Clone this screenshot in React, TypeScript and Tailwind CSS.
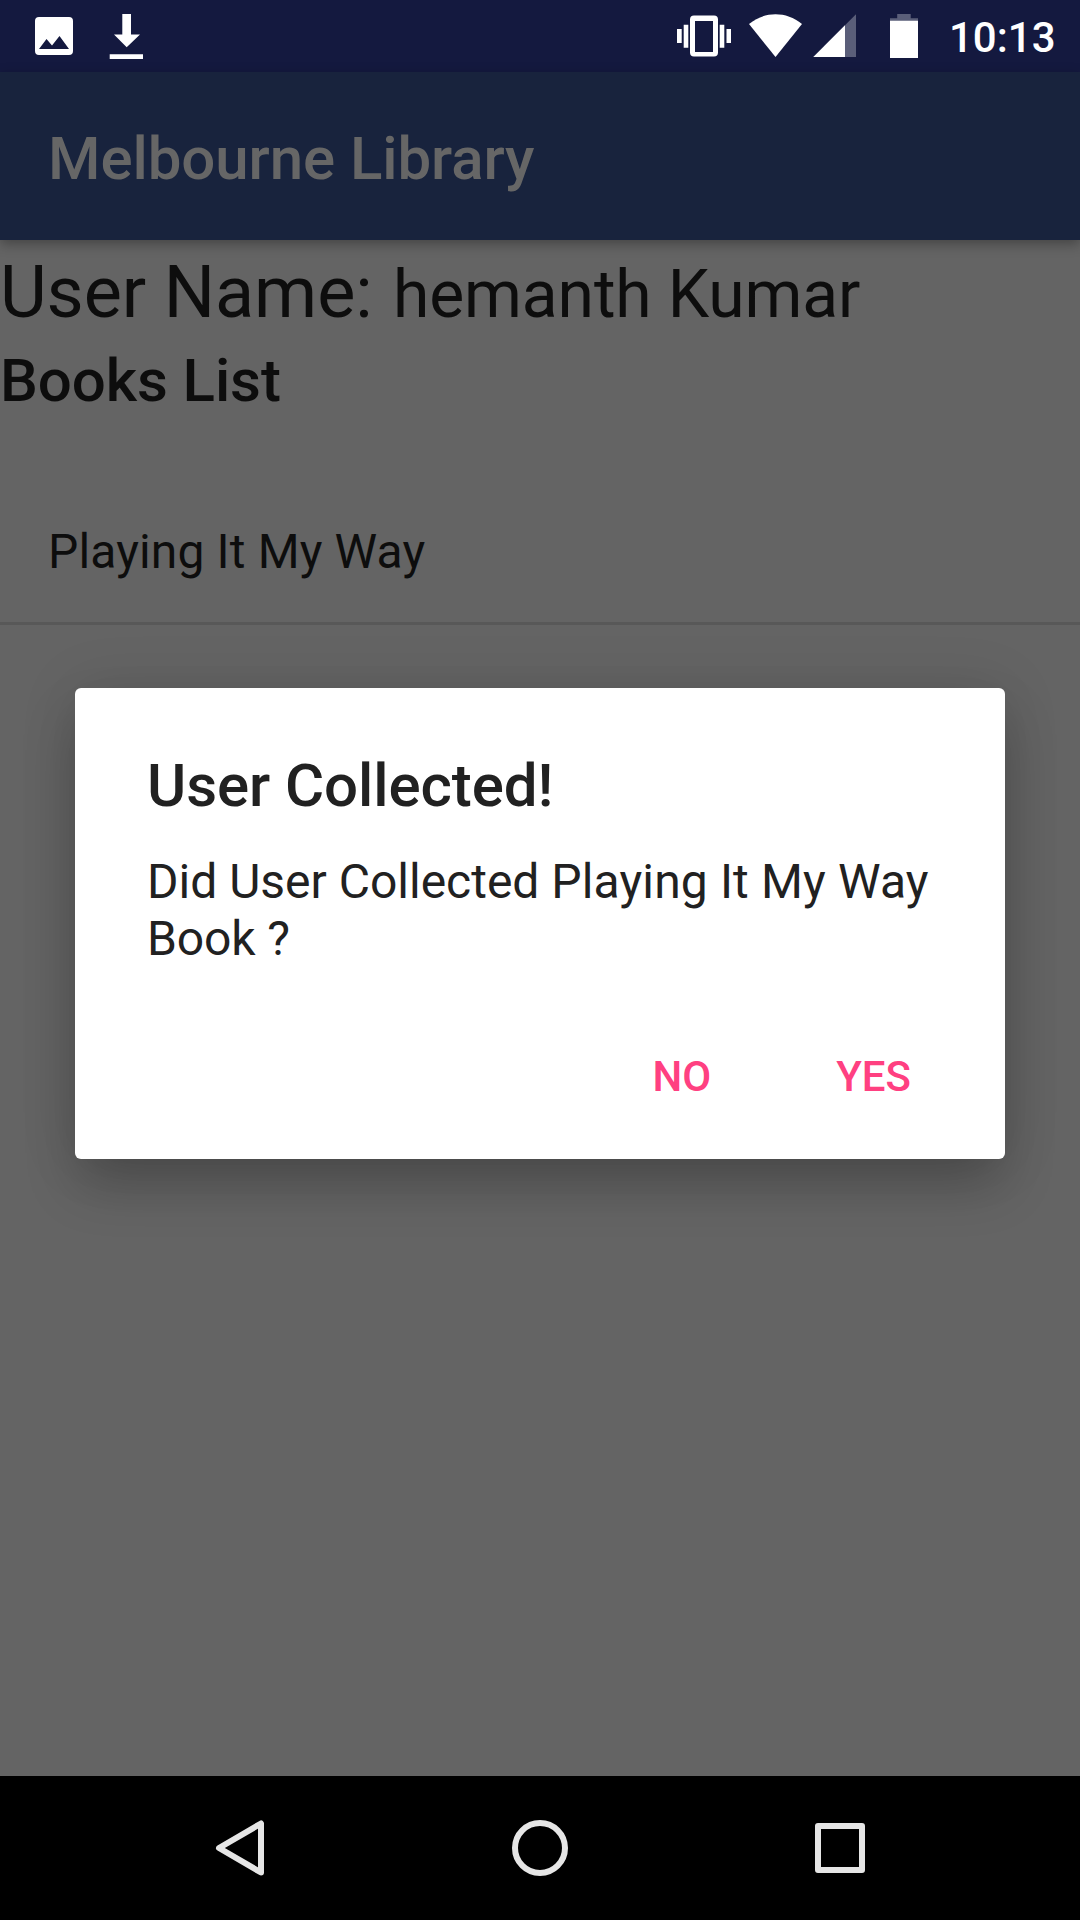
import React from "react";

function StatusBar() {
  return (
    <header className="flex h-[72px] shrink-0 items-start bg-[#14193f] text-white">
      <svg className="ml-[24px] h-[72px] w-[144px]" viewBox="24 0 144 72" fill="currentColor">
        <path fillRule="evenodd" d="M39 17h30a4 4 0 0 1 4 4v30a4 4 0 0 1-4 4H39a4 4 0 0 1-4-4V21a4 4 0 0 1 4-4Zm7.5 22L39 49h30L59.500 36l-7.500 9.500Z" />
        <path d="M122.300 14h8.700v20.500h9L126.700 47.200 114 34.500h8.300ZM109.700 54.200h33.300V59h-33.300Z" />
      </svg>
      <svg className="ml-auto h-[72px] w-[270px]" viewBox="670 0 270 72" fill="currentColor">
        <path fillRule="evenodd" d="M694 15.500h20a4 4 0 0 1 4 4v33a4 4 0 0 1-4 4h-20a4 4 0 0 1-4-4v-33a4 4 0 0 1 4-4Zm1 5.500v31h18V21Z" />
        <path d="M677 29h4.700v14H677ZM683.700 24.700h4.600v23h-4.600ZM719.700 24.700h4.600v23h-4.600ZM726.500 29h4.500v14h-4.500Z" />
        <path d="M775.500 57 749 24C765 11 786 11 802 24Z" />
        <path d="M813.300 57 856 14.300V57Z" opacity=".3" />
        <path d="M813.300 57 845 25.300V57Z" />
        <path d="M897.200 14h13.500v4.300h7.300V21h-28v-2.700h7.200Z" opacity=".3" />
        <path d="M890 20.700h28V58h-28Z" />
      </svg>
      <span className="mr-[23px] ml-[9px] mt-[13px] w-[108px] text-[42px] leading-[49px] font-medium whitespace-nowrap">10:13</span>
    </header>
  );
}

function NavigationBar() {
  return (
    <nav className="flex h-[144px] shrink-0 items-center justify-center gap-[240px] bg-black text-[#e6e6e6]">
      <svg className="h-[60px] w-[60px]" viewBox="0 0 60 60" fill="none" stroke="currentColor" strokeWidth="6" strokeLinejoin="round">
        <path d="M51 5.500v49L9 30Z" />
      </svg>
      <svg className="h-[60px] w-[60px]" viewBox="0 0 60 60" fill="none" stroke="currentColor" strokeWidth="6">
        <circle cx="30" cy="30" r="25" />
      </svg>
      <svg className="h-[60px] w-[60px]" viewBox="0 0 60 60" fill="none" stroke="currentColor" strokeWidth="6" strokeLinejoin="round">
        <rect x="8" y="8" width="44" height="44" />
      </svg>
    </nav>
  );
}

function ConfirmDialog() {
  return (
    <section
      role="dialog"
      className="absolute top-[616px] left-[75px] flex h-[471px] w-[930px] flex-col rounded-[6px] bg-white px-[72px] pt-[63px] text-[#212121] shadow-[0_28px_54px_-4px_rgba(0,0,0,0.24),0_0_60px_rgba(0,0,0,0.1)]"
    >
      <h2 className="text-[60px] leading-[70px] font-medium tracking-[-0.08px]">User Collected!</h2>
      <p className="mt-[32px] text-[48px] leading-[57px] whitespace-nowrap">
        Did User Collected <span className="tracking-[0.14px]">Playing It My Way</span>
        <br />
        <span className="tracking-[-0.15px]">Book ?</span>
      </p>
      <div className="mt-[85px] flex justify-end gap-[125px] pr-[22px] text-[42px] leading-[49px] font-medium text-[#ff4081]">
        <button>NO</button>
        <button>YES</button>
      </div>
    </section>
  );
}

export default function App() {
  return (
    <div className="flex h-[1920px] w-[1080px] flex-col overflow-hidden bg-[#646464] font-['Roboto',sans-serif] text-[#0d0d0d]">
      <StatusBar />
      <div className="relative flex flex-1 flex-col">
        <div className="flex h-[168px] items-center bg-[#18233d] px-[48px] pt-[6px] text-[60px] leading-[70px] font-medium tracking-[-0.08px] text-[#666666] shadow-[0_4px_12px_rgba(0,0,0,0.32)]">
          <h1>Melbourne Library</h1>
        </div>
        <main>
          <div className="flex items-baseline pt-[11px] leading-[84px] whitespace-nowrap">
            <span className="w-[393px] text-[72px] tracking-[-0.1px]">User Name:</span>
            <span className="text-[66px] tracking-[-0.14px]">hemanth Kumar</span>
          </div>
          <h2 className="mt-[9px] text-[60px] leading-[70px] font-medium tracking-[-0.08px]">Books List</h2>
          <ul className="mt-[62px]">
            <li className="flex h-[147px] items-center border-b-[3px] border-[#585858] px-[48px] pt-[3px] text-[48px] leading-[56px] tracking-[0.14px]">Playing It My Way</li>
          </ul>
        </main>
        <ConfirmDialog />
      </div>
      <NavigationBar />
    </div>
  );
}
